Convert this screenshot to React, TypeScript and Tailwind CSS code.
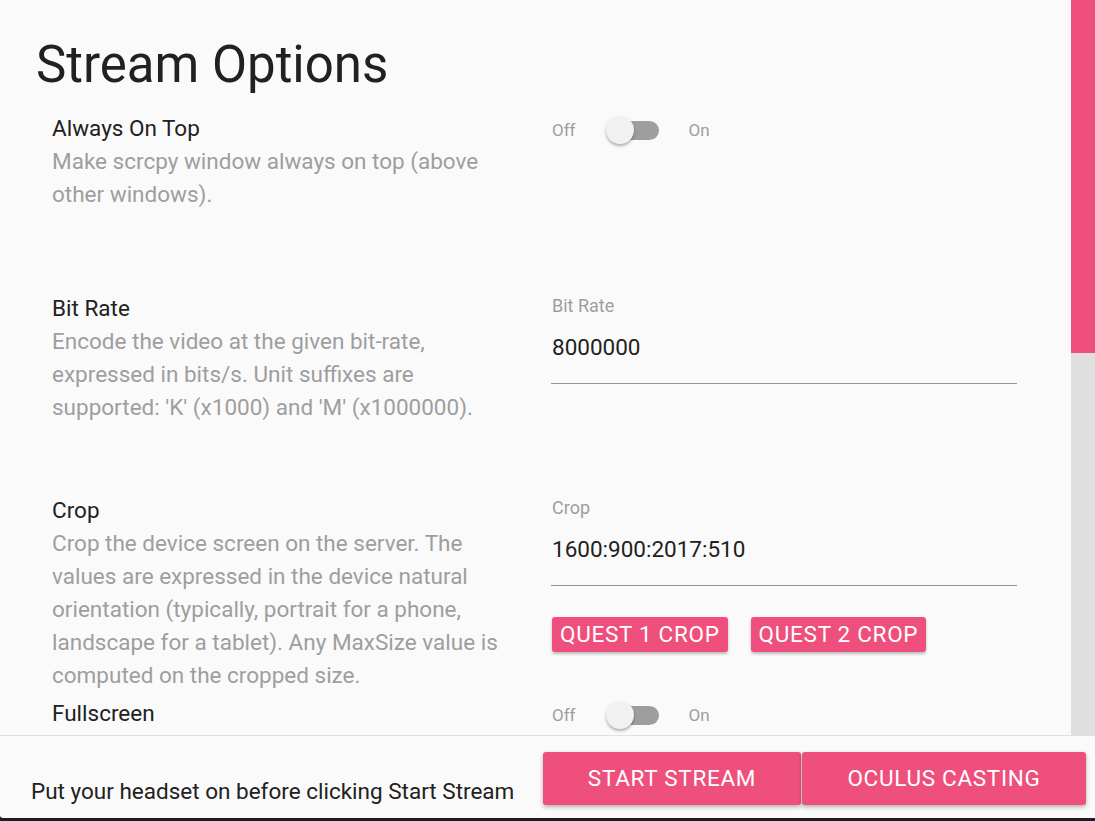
import React from "react";

function Toggle() {
  return (
    <div className="flex items-center h-[30px] mt-[3px] pl-[1px]">
      <span className="text-[17px] leading-[20px] text-[#9e9e9e]">Off</span>
      <div className="relative w-[53px] h-[30px] ml-[30px]">
        <div className="absolute left-[4px] top-[5.5px] w-[49px] h-[19px] rounded-full bg-[#9e9e9e]" />
        <div className="absolute left-0 top-[1px] w-[28px] h-[28px] rounded-full bg-[#f1f1f1] shadow-[0_2px_3px_rgba(0,0,0,0.3)]" />
      </div>
      <span className="ml-[30px] text-[17px] leading-[20px] text-[#9e9e9e]">On</span>
    </div>
  );
}

function Field({ label, value }: { label: string; value: string }) {
  return (
    <div>
      <div className="mt-[2px] pl-[1px] text-[18px] leading-[24px] text-[#9e9e9e]">{label}</div>
      <div className="mt-[13px] pb-[19px] border-b border-[#949494] pl-[1px] text-[22.5px] leading-[33px] text-[#212121]">
        {value}
      </div>
    </div>
  );
}

function Row({
  h,
  title,
  desc,
  right,
}: {
  h: string;
  title: string;
  desc?: string;
  right: React.ReactNode;
}) {
  return (
    <div className={`grid grid-cols-[466px_466px] gap-x-[33px] pl-[52px] ${h}`}>
      <div className="text-[22.5px] leading-[33px]">
        <div className="text-[#212121]">{title}</div>
        {desc && <div className="text-[#9e9e9e]">{desc}</div>}
      </div>
      <div>{right}</div>
    </div>
  );
}

const pinkBtn =
  "rounded-[3px] bg-[#ee4f7c] text-white text-[22.5px] tracking-[0.7px]";

export default function App() {
  return (
    <div className="w-[1095px] h-[821px] bg-[#1e1d25] overflow-hidden font-['Roboto',sans-serif]">
      <div className="h-[818px] bg-[#fafafa] flex flex-col rounded-bl-[3px]">
        <div className="flex h-[735px]">
          <div className="flex-1 overflow-hidden pt-[34px]">
            <h1 className="pl-[36px] h-[61px] text-[51px] leading-[61px] text-[#212121] font-normal">
              Stream Options
            </h1>
            <div className="pt-[17px]">
              <Row
                h="h-[180px]"
                title="Always On Top"
                desc="Make scrcpy window always on top (above other windows)."
                right={<Toggle />}
              />
              <Row
                h="h-[202px]"
                title="Bit Rate"
                desc="Encode the video at the given bit-rate, expressed in bits/s. Unit suffixes are supported: 'K' (x1000) and 'M' (x1000000)."
                right={<Field label="Bit Rate" value="8000000" />}
              />
              <Row
                h="h-[203px]"
                title="Crop"
                desc="Crop the device screen on the server. The values are expressed in the device natural orientation (typically, portrait for a phone, landscape for a tablet). Any MaxSize value is computed on the cropped size."
                right={
                  <div>
                    <Field label="Crop" value="1600:900:2017:510" />
                    <div className="flex gap-[23px] mt-[31px] pl-[1px]">
                      <button className={`h-[35px] px-[8px] leading-[35px] shadow-[0_2px_3px_rgba(0,0,0,0.25)] ${pinkBtn}`}>
                        QUEST 1 CROP
                      </button>
                      <button className={`h-[35px] px-[8px] leading-[35px] shadow-[0_2px_3px_rgba(0,0,0,0.25)] ${pinkBtn}`}>
                        QUEST 2 CROP
                      </button>
                    </div>
                  </div>
                }
              />
              <Row h="h-[200px]" title="Fullscreen" right={<Toggle />} />
            </div>
          </div>
          <div className="w-[24px] flex flex-col">
            <div className="h-[353px] bg-[#ee4f7c]" />
            <div className="flex-1 bg-[#dfdfdf]" />
          </div>
        </div>
        <div className="flex-1 border-t border-[#e0e0e0] flex items-start justify-between pl-[31px] pr-[9px]">
          <div className="mt-[39px] text-[22.5px] leading-[33px] text-[#212121]">
            Put your headset on before clicking Start Stream
          </div>
          <div className="flex gap-[1px] mt-[16px]">
            <button className={`w-[258px] h-[53px] shadow-[0_2px_4px_rgba(0,0,0,0.3)] ${pinkBtn}`}>
              START STREAM
            </button>
            <button className={`w-[284px] h-[53px] shadow-[0_2px_4px_rgba(0,0,0,0.3)] ${pinkBtn}`}>
              OCULUS CASTING
            </button>
          </div>
        </div>
      </div>
    </div>
  );
}
